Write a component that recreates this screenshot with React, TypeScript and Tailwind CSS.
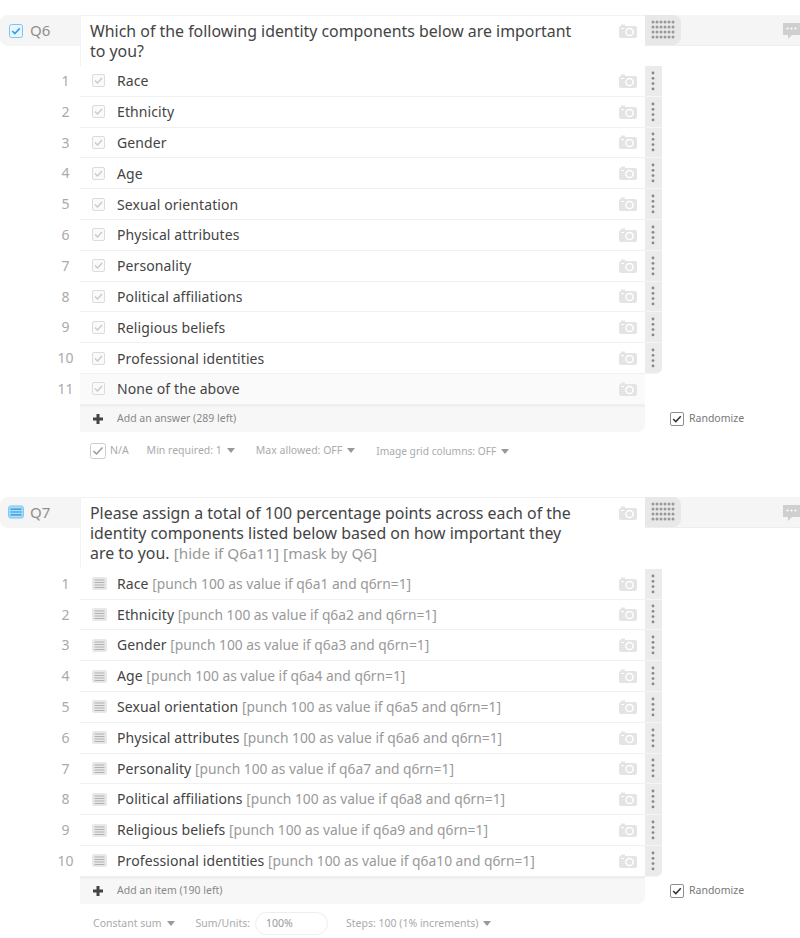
import { ReactNode } from "react";

const identities = [
  "Race",
  "Ethnicity",
  "Gender",
  "Age",
  "Sexual orientation",
  "Physical attributes",
  "Personality",
  "Political affiliations",
  "Religious beliefs",
  "Professional identities",
];

function CameraIcon() {
  return (
    <svg width="18" height="14" viewBox="0 0 18 14" className="shrink-0">
      <rect x="0" y="2" width="18" height="12" rx="2" fill="#e4e4e4" />
      <rect x="2" y="0.5" width="4" height="2" fill="#e4e4e4" />
      <circle cx="10.5" cy="8" r="3.6" fill="#e4e4e4" stroke="#fff" strokeWidth="1.5" />
      <rect x="2" y="4" width="3" height="1" fill="#fff" />
    </svg>
  );
}

function GridDots() {
  return (
    <svg width="24" height="20" viewBox="0 0 24 20">
      {[0, 1, 2, 3].map((r) =>
        [0, 1, 2, 3, 4, 5].map((c) => (
          <circle key={`${r}-${c}`} cx={2 + c * 4} cy={2 + r * 5} r="1.5" fill="#999" />
        ))
      )}
    </svg>
  );
}

function HandleDots() {
  return (
    <svg width="4" height="20" viewBox="0 0 4 20">
      {[0, 1, 2, 3].map((i) => (
        <circle key={i} cx="2" cy={2 + i * 5.3} r="1.4" fill="#888" />
      ))}
    </svg>
  );
}

function CommentIcon() {
  return (
    <svg width="17" height="19" viewBox="0 0 17 19" className="shrink-0">
      <path d="M0 1h17v12H9l-4 4v-4H0z" fill="#cfcfcf" />
      <circle cx="4.5" cy="6.5" r="1.1" fill="#fff" />
      <circle cx="8.5" cy="6.5" r="1.1" fill="#fff" />
      <circle cx="12.5" cy="6.5" r="1.1" fill="#fff" />
    </svg>
  );
}

function CheckRowIcon() {
  return (
    <svg width="13" height="13" viewBox="0 0 13 13" className="shrink-0">
      <rect x="0.5" y="0.5" width="12" height="12" rx="1.5" fill="#fafafa" stroke="#dcdcdc" />
      <path d="M3 6.5l2.5 2.5 4.5-5" fill="none" stroke="#c8c8c8" strokeWidth="1.3" />
    </svg>
  );
}

function ListRowIcon() {
  return (
    <svg width="15" height="13" viewBox="0 0 15 13" className="shrink-0">
      <rect x="0" y="0" width="15" height="13" rx="2" fill="#e8e8e8" />
      <path d="M2.5 3h10M2.5 5.5h10M2.5 8h10M2.5 10.5h10" stroke="#b0b0b0" strokeWidth="1" />
    </svg>
  );
}

function SmallCheckbox({ dark }: { dark?: boolean }) {
  return (
    <svg width="14" height="14" viewBox="0 0 14 14" className="shrink-0">
      <rect x="0.5" y="0.5" width="13" height="13" rx="1.5" fill="#fff" stroke={dark ? "#8a8f96" : "#c6c6c6"} />
      <path d="M3.2 7l2.6 2.6 5-5.4" fill="none" stroke={dark ? "#333" : "#999"} strokeWidth="1.5" />
    </svg>
  );
}

function Caret() {
  return <span className="inline-block w-0 h-0 ml-[5px] mb-[1px] border-x-[4px] border-x-transparent border-t-[5px] border-t-[#999]" />;
}

function Row({ num, icon, label, note, handle, shaded, lastHandle }: { num: number; icon: ReactNode; label: string; note?: string; handle: boolean; shaded?: boolean; lastHandle?: boolean }) {
  return (
    <div className="flex h-[30.8px]">
      <div className="w-[80px] pl-[51px] text-center text-[14px] leading-[30px] text-[#aaaaaa]">{num}</div>
      <div className={`w-[565px] flex items-center pl-[12px] pr-[8px] border-b border-[#f1f1f1] ${shaded ? "bg-[#fafafa]" : "bg-white"}`}>
        <div className="w-[25px] flex">{icon}</div>
        <div className="flex-1 text-[14px] tracking-[0.1px] text-[#444444] whitespace-nowrap">
          {label}
          {note && <span className="text-[13.8px] tracking-normal text-[#999999]"> {note}</span>}
        </div>
        <CameraIcon />
      </div>
      {handle && (
        <div className={`w-[17px] flex items-center justify-center pr-[1px] bg-[#ebebeb] border-b border-[#f5f5f5] ${lastHandle ? "rounded-br-md" : ""}`}>
          <HandleDots />
        </div>
      )}
    </div>
  );
}

function Question({ id, typeIcon, title, rows, addLabel, footer }: { id: string; typeIcon: ReactNode; title: ReactNode; rows: ReactNode; addLabel: string; footer: ReactNode }) {
  return (
    <section>
      <div className="flex">
        <div className="w-[80px] h-[31px] flex items-center gap-[6px] pl-[8px] bg-[#f5f5f5] rounded-l-lg text-[15px] text-[#8f8f8f]">
          <div className="w-[16px] flex justify-center">{typeIcon}</div>
          {id}
        </div>
        <div className="w-[565px] flex justify-between pl-[9px] pr-[8px] pt-[5px] pb-[5px] border-t border-l border-[#f3f3f3] text-[15.9px] leading-[20px] text-[#444444]">
          <div className="w-[490px]">{title}</div>
          <div className="pt-[3px]">
            <CameraIcon />
          </div>
        </div>
        <div className="flex-1 h-[31px] flex justify-between bg-[#f5f5f5] border-b border-[#eeeeee]">
          <div className="w-[36px] h-[30px] flex items-center justify-center bg-[#e8e8e8] rounded-r-lg">
            <GridDots />
          </div>
          <div className="pt-[7px]">
            <CommentIcon />
          </div>
        </div>
      </div>
      {rows}
      <div className="flex">
        <div className="w-[80px]" />
        <div className="w-[565px] h-[27px] flex items-center pl-[13px] pt-[1px] bg-[#f7f7f7] rounded-br-lg shadow-[inset_0_2px_2px_-1px_#e8e8e8]">
          <svg width="10" height="10" viewBox="0 0 10 10" className="mr-[14px]">
            <path d="M3.5 0h3v3.5H10v3H6.5V10h-3V6.5H0v-3h3.5z" fill="#444" />
          </svg>
          <span className="text-[10.5px] text-[#888888]">{addLabel}</span>
        </div>
        <div className="flex items-center gap-[5px] pl-[25px] pt-[1px] text-[10.5px] text-[#777777]">
          <SmallCheckbox dark />
          Randomize
        </div>
      </div>
      {footer}
    </section>
  );
}

export default function App() {
  return (
    <div className="w-[800px] h-[938px] overflow-hidden bg-white pt-[15px] font-['Noto_Sans',sans-serif]">
      <Question
        id="Q6"
        typeIcon={
          <svg width="14" height="14" viewBox="0 0 14 14">
            <rect x="0.5" y="0.5" width="13" height="13" rx="2" fill="#eaf6fd" stroke="#7cc5f0" />
            <path d="M3.2 7l2.6 2.6 5-5.2" fill="none" stroke="#2f9fe6" strokeWidth="1.6" />
          </svg>
        }
        title="Which of the following identity components below are important to you?"
        rows={[...identities, "None of the above"].map((label, i) => (
          <Row key={label} num={i + 1} icon={<CheckRowIcon />} label={label} handle={i < 10} shaded={i === 10} lastHandle={i === 9} />
        ))}
        addLabel="Add an answer (289 left)"
        footer={
          <div className="flex items-center h-[39px] pl-[90px] text-[10.5px] text-[#aaaaaa]">
            <svg width="16" height="16" viewBox="0 0 16 16" className="mr-[4px]">
              <rect x="0.5" y="0.5" width="15" height="15" rx="2" fill="#fff" stroke="#cccccc" />
              <path d="M3.5 8l3 3 6-6.5" fill="none" stroke="#999" strokeWidth="1.5" />
            </svg>
            <span className="mr-[18px]">N/A</span>
            <span className="mr-[21px]">Min required: 1<Caret /></span>
            <span className="mr-[21px]">Max allowed: OFF<Caret /></span>
            <span className="text-[10.2px]">Image grid columns: OFF<Caret /></span>
          </div>
        }
      />
      <div className="h-[26px]" />
      <Question
        id="Q7"
        typeIcon={
          <svg width="17" height="14" viewBox="0 0 17 14">
            <rect x="0.5" y="0.5" width="16" height="13" rx="2.5" fill="#a9dcf8" stroke="#7cc5f0" />
            <path d="M2.5 4h12M2.5 7h12M2.5 10h12" stroke="#2f8fd6" strokeWidth="1.2" />
          </svg>
        }
        title={
          <div className="pb-[1px]">
            Please assign a total of 100 percentage points across each of the identity components listed below based on how important they are to you.{" "}
            <span className="text-[15.3px] leading-[20px] text-[#999999]">[hide if Q6a11] [mask by Q6]</span>
          </div>
        }
        rows={identities.map((label, i) => (
          <Row key={label} num={i + 1} icon={<ListRowIcon />} label={label} note={`[punch 100 as value if q6a${i + 1} and q6rn=1]`} handle lastHandle={i === 9} />
        ))}
        addLabel="Add an item (190 left)"
        footer={
          <div className="flex items-center h-[39px] pt-[1px] pl-[93px] text-[10.5px] text-[#aaaaaa]">
            <span className="mr-[21px]">Constant sum<Caret /></span>
            <span className="mr-[5px]">Sum/Units:</span>
            <div className="w-[73px] h-[23px] flex items-center pl-[10px] mr-[18px] border border-[#eeeeee] rounded-full text-[#999999]">100%</div>
            <span>Steps: 100 (1% increments)<Caret /></span>
          </div>
        }
      />
    </div>
  );
}
